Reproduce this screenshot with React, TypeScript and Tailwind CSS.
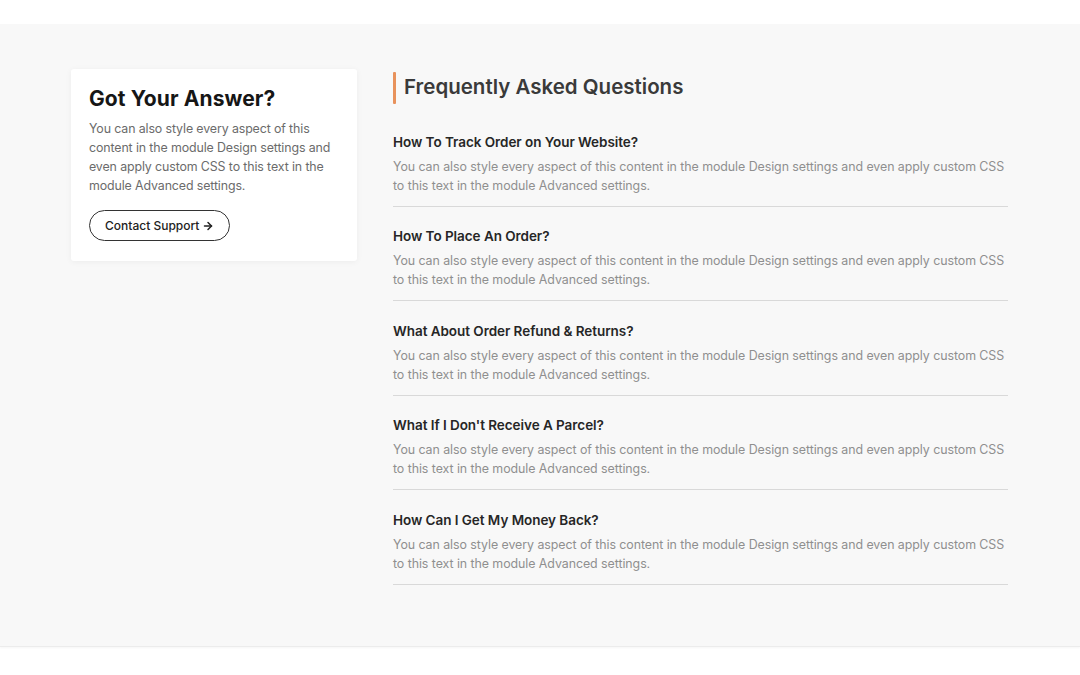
import { ArrowRight } from 'lucide-react'

const faqs = [
  'How To Track Order on Your Website?',
  'How To Place An Order?',
  'What About Order Refund & Returns?',
  "What If I Don't Receive A Parcel?",
  'How Can I Get My Money Back?',
]

const body =
  'You can also style every aspect of this content in the module Design settings and even apply custom CSS to this text in the module Advanced settings.'

export default function App() {
  return (
    <div className="min-h-screen bg-white" style={{ fontFamily: 'Inter, "Noto Sans", sans-serif' }}>
      <div className="h-[24px]" />
      <section className="h-[623px] bg-[#f8f8f8] border-b border-[#ececec] shadow-[0_1px_2px_rgba(0,0,0,0.04)]">
        <div className="flex gap-[36px] pl-[71px] pt-[45px]">
          <aside className="w-[286px] self-start bg-white rounded-[3px] shadow-[0_1px_6px_rgba(0,0,0,0.05)] px-[18px] pt-[17px] pb-[20px]">
            <h2 className="text-[21px] font-bold text-[#161616] tracking-[0.1px] leading-[26px]">Got Your Answer?</h2>
            <p className="mt-[7px] text-[12.4px] leading-[19px] text-[#6b6b6b] tracking-[-0.12px]">
              You can also style every aspect of this content in the module Design settings and even apply custom CSS to this text in the module Advanced settings.
            </p>
            <button className="mt-[15px] flex items-center gap-[3px] h-[31px] px-[15px] rounded-full border-[1.5px] border-[#333] text-[12px] font-medium text-[#222]">
              Contact Support
              <ArrowRight size={12} strokeWidth={3} />
            </button>
          </aside>

          <div className="w-[615px]">
            <div className="flex items-center gap-[8px] h-[32px] mt-[3px]">
              <span className="w-[3px] h-[32px] bg-[#e8925c] rounded-[1px]" />
              <h2 className="text-[20.5px] font-semibold text-[#3a3a3a] tracking-[0px] -mt-[1px]">Frequently Asked Questions</h2>
            </div>
            <div className="mt-[28.5px]">
              {faqs.map((q) => (
                <div key={q} className="border-b border-[#d9d9d9] pb-[11px] mb-[20.5px]">
                  <h3 className="text-[13.5px] font-semibold text-[#262626] tracking-[-0.05px] leading-[19px]">{q}</h3>
                  <p className="mt-[5px] text-[12.4px] leading-[19px] text-[#8f8f8f] tracking-[-0.06px]">{body}</p>
                </div>
              ))}
            </div>
          </div>
        </div>
      </section>
    </div>
  )
}
